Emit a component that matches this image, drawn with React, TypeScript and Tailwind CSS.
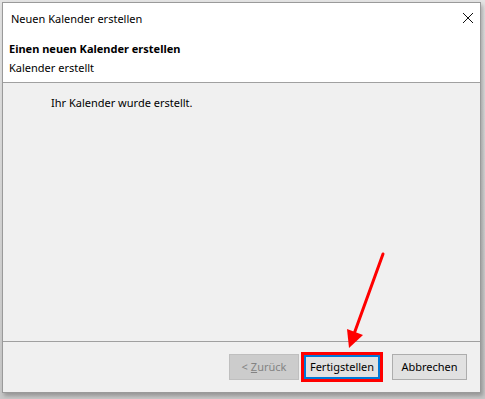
import React from "react";

export default function App() {
  const font = { fontFamily: '"Noto Sans", "Open Sans", sans-serif' };
  return (
    <div className="relative w-[485px] h-[399px] bg-[#d4d4d4] overflow-hidden" style={font}>
      <div className="absolute left-0 top-0 w-[485px] h-[399px] bg-gradient-to-b from-[#e4e4e4] to-[#c8c8c8]" />
      <div className="relative ml-[2px] mt-[2px] w-[479px] h-[391px] border border-[#9a9a9a] bg-[#f0f0f0] flex flex-col shadow-[2px_3px_4px_rgba(0,0,0,0.25)] text-[11px] text-black">
        <div className="h-[30px] bg-white flex items-center justify-between pl-[8px] pr-[6px] shrink-0">
          <span className="leading-none">Neuen Kalender erstellen</span>
          <svg width="12" height="12" viewBox="0 0 12 12">
            <path d="M1 1 L11 11 M11 1 L1 11" stroke="#111" strokeWidth="1" />
          </svg>
        </div>
        <div className="h-[49px] bg-white pl-[6px] pt-[8px] flex flex-col shrink-0">
          <span className="font-bold text-[11px] leading-[16px]">Einen neuen Kalender erstellen</span>
          <span className="leading-[16px] mt-[3px]">Kalender erstellt</span>
        </div>
        <div className="h-[1px] bg-[#a0a0a0] shrink-0" />
        <div className="flex-1 pl-[48px] pt-[12px]">
          <span className="leading-[16px]">Ihr Kalender wurde erstellt.</span>
        </div>
        <div className="h-[1px] bg-[#a0a0a0] shrink-0" />
        <div className="h-[50px] flex items-start justify-end pr-[13px] pt-[12px] shrink-0">
          <div className="w-[70px] h-[26px] bg-[#cccccc] border border-[#bfbfbf] text-[#838383] flex items-center justify-center">
            &lt; <span className="underline ml-[3px]">Z</span>urück
          </div>
          <div className="ml-[2px] -mt-[2px] border-[3px] border-[#ff0000]">
            <div className="w-[76px] h-[24px] bg-[#e1e1e1] border-2 border-[#0078d7] flex items-center justify-center">
              Fertigstellen
            </div>
          </div>
          <div className="ml-[9px] w-[75px] h-[26px] bg-[#e1e1e1] border border-[#adadad] flex items-center justify-center">
            Abbrechen
          </div>
        </div>
      </div>
      <svg className="absolute left-0 top-0 pointer-events-none" width="485" height="399" viewBox="0 0 485 399">
        <line x1="383" y1="254" x2="354" y2="334" stroke="#ff0000" strokeWidth="3" strokeLinecap="round" />
        <polygon points="349,348 347,329 363,335" fill="#ff0000" />
      </svg>
    </div>
  );
}
